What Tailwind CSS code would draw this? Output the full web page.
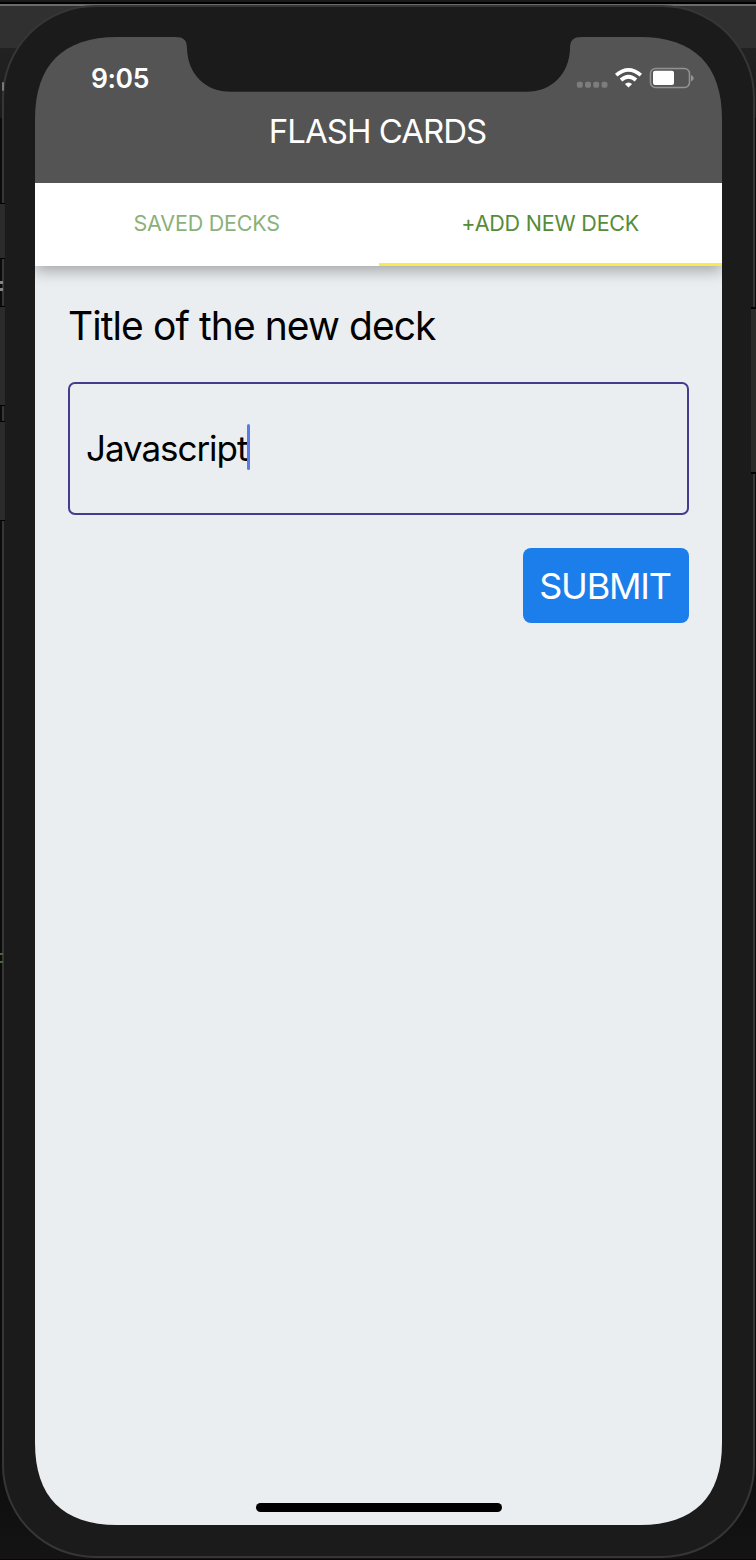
<!DOCTYPE html>
<html lang="en">
<head>
<meta charset="utf-8">
<title>Flash Cards</title>
<script src="https://cdn.jsdelivr.net/npm/@tailwindcss/browser@4"></script>
</head>
<body class="relative h-[1560px] w-[756px] overflow-hidden bg-[#0b0b0b] font-['Inter',sans-serif]">
  <!-- desktop behind the phone -->
  <div class="absolute inset-x-0 top-0 h-[118px]">
    <div class="h-[2px] bg-[#1b1b1c]"></div>
    <div class="h-[2px] bg-black"></div>
    <div class="h-[2px] bg-[#6b6b6b]"></div>
    <div class="h-[42px] bg-[#303030]"></div>
    <div class="h-[70px] bg-linear-to-b from-[#222] to-[#1a1a1a]"></div>
  </div>
  <div class="absolute inset-x-0 bottom-0 h-[120px] bg-linear-to-b from-[#0b0b0b] to-[#141414]"></div>
  <div class="absolute inset-x-0 bottom-0 h-px bg-[#0a0508]"></div>

  <!-- phone body -->
  <div class="relative mx-auto flow-root h-[1558px] w-[753px] pt-[5px]">
    <div class="h-[1553px] rounded-[93px] border-2 border-[#363636] bg-[#1b1b1b] px-[31.5px] pt-[30px]">
      <main class="relative flex h-[1488px] w-[687px] flex-col [clip-path:path('M0_82C0_28_28_0_82_0H605C659_0_687_28_687_82V1406C687_1460_659_1488_605_1488H82C28_1488_0_1460_0_1406Z')]">
        <header class="relative z-10 h-[146px] shrink-0 bg-[#545454]">
          <svg class="absolute left-[140px] top-0" width="408" height="56" viewBox="0 0 408 56"><path d="M0 0C9 0 12 3 12 12C13 37 30 54.800 56 54.800H351C377 54.800 394 37 395 12C395 3 398 0 407 0Z" fill="#1b1b1b"/></svg>
          <div class="flex h-[72px] items-start pl-[56px] pr-[28px] pt-[25px] text-white">
            <span class="text-[26.500px] font-semibold leading-[32px] tracking-[-0.4px]">9:05</span>
            <svg class="ml-auto mt-[5px]" width="120" height="24" viewBox="0 0 120 24" fill="none">
              <g fill="#7d7d7d"><rect x="2.800" y="14.800" width="6" height="6" rx="2"/><rect x="11" y="14.800" width="6" height="6" rx="2"/><rect x="19.200" y="14.800" width="6" height="6" rx="2"/><rect x="27.500" y="14.800" width="6" height="6" rx="2"/></g>
              <g stroke="#fff" stroke-width="3.700"><path d="M42.200 8.200Q54.500-2.400 66.800 8.200"/><path d="M47 13Q54.500 6.400 62 13"/></g>
              <path d="M50.900 17Q54.500 13.800 58.100 17L54.500 20.600Z" fill="#fff"/>
              <rect x="76.500" y="1.500" width="39" height="19" rx="5" stroke="#929292" stroke-width="1.600"/>
              <rect x="79" y="3.800" width="21" height="14.200" rx="2" fill="#fff"/>
              <path d="M117 8Q119.700 8.800 119.700 11.200T117 14.500Z" fill="#929292"/>
            </svg>
          </div>
          <h1 class="pt-[2px] pr-[2px] text-center text-[33px] leading-[40px] tracking-[-1px] text-white">FLASH CARDS</h1>
        </header>
        <nav class="relative grid h-[83px] shrink-0 grid-cols-2 bg-white text-center text-[21.500px] leading-[80px] tracking-[-0.2px] shadow-[0_5px_14px_rgba(0,0,0,0.3)]">
          <span class="text-[#8bb17b]">SAVED DECKS</span>
          <span class="border-b-3 border-[#fbe94f] text-[#558b3a]">+ADD NEW DECK</span>
        </nav>
        <div class="flex grow flex-col bg-[#eaeef1]">
          <section class="flex flex-col px-[33px] pt-[34px]">
            <label class="text-[39px] leading-[51px] tracking-[-0.930px] text-black">Title of the new deck</label>
            <div class="mt-[31px] flex h-[133px] items-center rounded-[7px] border-2 border-[#463b8c] pl-[16px]">
              <span class="-mt-[1px] text-[35px] leading-[44px] tracking-[-1.050px] text-black">Javascript</span>
              <span class="-mt-[3px] h-[46px] w-[3px] rounded-full bg-[#587be9]"></span>
            </div>
            <button class="mt-[33px] h-[75px] w-[166px] self-end rounded-[8px] bg-[#1c7eea] pr-[2px] text-[36px] leading-[77px] tracking-[-1.200px] text-white">SUBMIT</button>
          </section>
          <div class="mb-[13px] mt-auto h-[9px] w-[246px] self-center rounded-full bg-black"></div>
        </div>
      </main>
    </div>
  </div>

  <!-- hardware buttons on the frame edges -->
  <div class="absolute left-0 top-[203px] h-[56px] w-[5px] border-y border-black bg-[#2b2b2b]"></div>
  <div class="absolute left-0 top-[281px] h-[10px] w-[3px] border-y-3 border-[#858585]"></div>
  <div class="absolute left-0 top-[306px] h-[100px] w-[5px] border-y border-black bg-[#2b2b2b]"></div>
  <div class="absolute left-0 top-[421px] h-[100px] w-[5px] border-y border-black bg-[#2b2b2b]"></div>
  <div class="absolute left-0 top-[953px] h-[10px] w-[3px] border-y-2 border-[#4d653e]"></div>
  <div class="absolute right-0 top-[307px] h-[167px] w-[5px] border-y-2 border-black bg-[#2b2b29]"></div>
  <!-- glint where the top corner meets the left edge -->
  <div class="absolute left-[2px] top-[82px] h-[9px] w-[2px] rounded-full bg-[#777]"></div>
</body>
</html>
